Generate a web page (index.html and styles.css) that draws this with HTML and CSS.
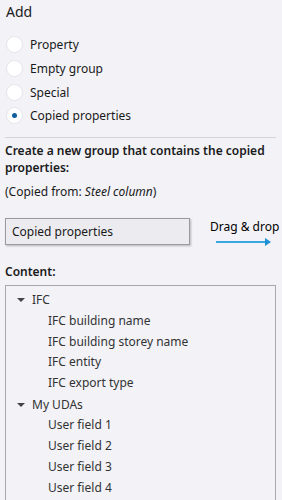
FILE: index.html
```html
<!DOCTYPE html>
<html lang="en">
<head>
    <meta charset="UTF-8">
    <title>Add</title>
    <link rel="stylesheet" href="styles.css">
</head>
<body>
    <div id="panel">
        <h3 class="title">Add</h3>
        <ul class="radio-list">
            <li><span class="radio"></span>Property</li>
            <li><span class="radio"></span>Empty group</li>
            <li><span class="radio"></span>Special</li>
            <li><span class="radio checked"></span>Copied properties</li>
        </ul>
        <div class="sep"></div>
        <p class="desc">Create a new group that contains the copied properties:</p>
        <p class="from">(Copied from: <i>Steel column</i>)</p>

        <div class="drag-row">
            <div class="group-box">Copied properties</div>
            <div class="drag">
                <span>Drag &amp; drop</span>
                <svg width="56" height="8" viewBox="0 0 56 8">
                    <line x1="0" y1="4" x2="50" y2="4" stroke="#3aa8e0" stroke-width="2"/>
                    <polygon points="49,0 55,4 49,8" fill="#1e90d6"/>
                </svg>
            </div>
        </div>

        <p class="label">Content:</p>
        <div class="tree">
            <div class="node"><span class="caret"></span>IFC</div>
            <div class="leaf">IFC building name</div>
            <div class="leaf">IFC building storey name</div>
            <div class="leaf">IFC entity</div>
            <div class="leaf">IFC export type</div>
            <div class="node"><span class="caret"></span>My UDAs</div>
            <div class="leaf">User field 1</div>
            <div class="leaf">User field 2</div>
            <div class="leaf">User field 3</div>
            <div class="leaf">User field 4</div>
        </div>
    </div>
</body>
</html>
```

FILE: styles.css
```css
*{
    margin: 0;
    padding: 0;
    box-sizing: border-box;
}
html,body{
    background: #f2f2f7;
    height: 100%;
    overflow: hidden;
}
body{
    font-family: "Noto Sans", "Liberation Sans", sans-serif;
    font-size: 12px;
    color: #1a1a1a;
}
ul{
    list-style: none;
}
#panel{
    padding: 3px 6px 0 5px;
}
.title{
    font-size: 14px;
    font-weight: normal;
    line-height: 18px;
    margin-left: 1px;
}
.radio-list{
    margin-top: 12px;
}
.radio-list li{
    display: flex;
    align-items: center;
    height: 23.7px;
    margin-left: 1px;
}
.radio{
    width: 17px;
    height: 17px;
    border-radius: 50%;
    background: #fff;
    border: 1px solid #e4e4ea;
    margin-right: 7px;
    position: relative;
}
.radio.checked:after{
    content: '';
    position: absolute;
    left: 5px;
    top: 5px;
    width: 5px;
    height: 5px;
    border-radius: 50%;
    background: #0f5fa0;
}
.sep{
    height: 1px;
    background: #d4d4da;
    margin: 9px 0 0 0;
}
.desc{
    font-weight: 600;
    line-height: 17px;
    margin-top: 4px;
}
.from{
    line-height: 17px;
    margin-top: 7px;
}
.drag-row{
    display: flex;
    align-items: flex-start;
    margin-top: 18px;
}
.group-box{
    width: 185px;
    height: 27px;
    line-height: 25px;
    padding-left: 6px;
    background: #ebebf0;
    border: 1px solid #9a9aa0;
    box-shadow: 1px 1px 2px rgba(0,0,0,0.25);
    flex-shrink: 0;
}
.drag{
    margin-left: 20px;
    display: flex;
    flex-direction: column;
    margin-top: 1px;
    white-space: nowrap;
}
.drag span{
    line-height: 16px;
    color: #000;
}
.drag svg{
    margin: 3px 0 0 6px;
}
.label{
    font-weight: 600;
    margin-top: 17px;
    line-height: 17px;
}
.tree{
    border: 1px solid #a8a8ae;
    border-bottom: none;
    margin-top: 5px;
    height: 240px;
    padding-top: 4px;
}
.node,.leaf{
    height: 20.9px;
    line-height: 20px;
    color: #333;
}
.node{
    display: flex;
    align-items: center;
    padding-left: 11px;
}
.caret{
    width: 0;
    height: 0;
    border-left: 4px solid transparent;
    border-right: 4px solid transparent;
    border-top: 4px solid #444;
    margin-right: 7px;
}
.leaf{
    padding-left: 42px;
}
```
